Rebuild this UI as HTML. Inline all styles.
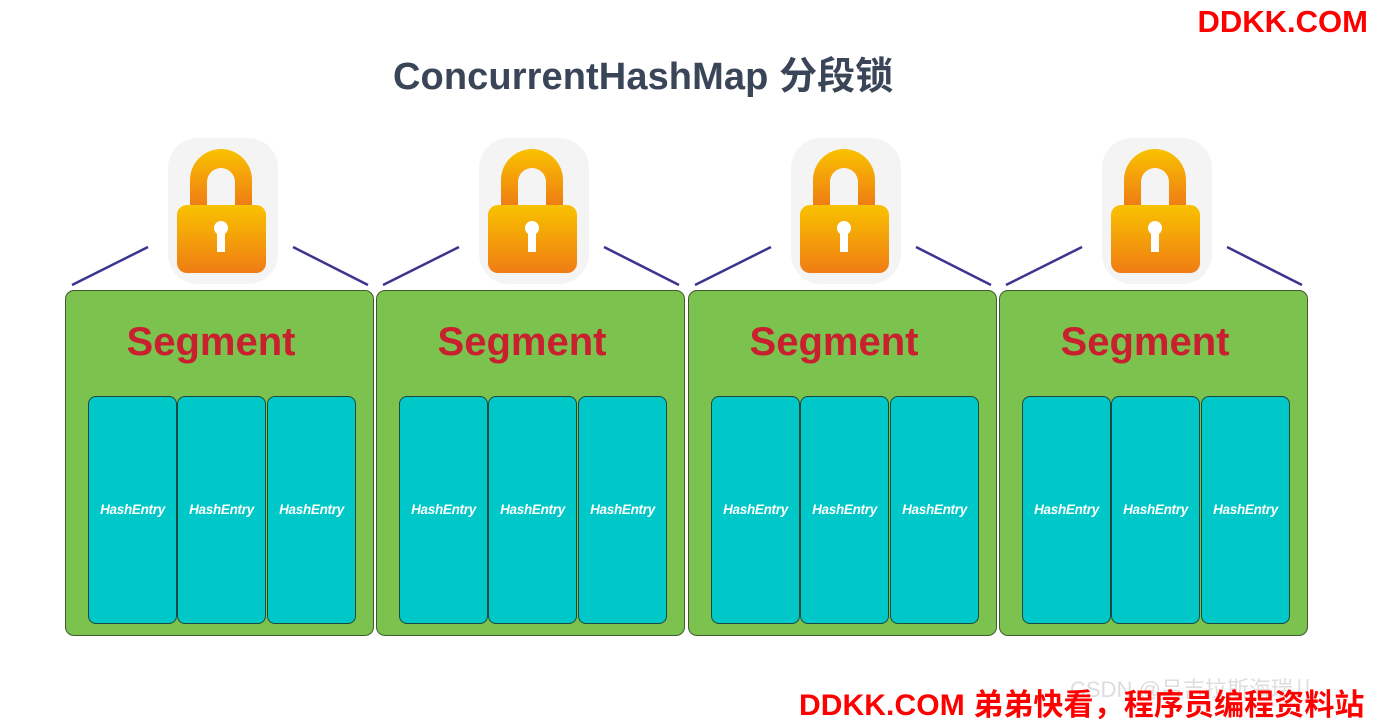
<!DOCTYPE html>
<html><head><meta charset="utf-8"><style>
body{margin:0;width:1373px;height:714px;background:#fff;position:relative;overflow:hidden;font-family:"Liberation Sans","Noto Sans CJK SC",sans-serif}
.a{position:absolute}
.seg{position:absolute;top:290px;width:309px;height:346px;background:#7cc24e;border:1px solid #3f5a2c;border-radius:9px;box-sizing:border-box}
.seg .t{position:absolute;left:0;width:290px;top:29px;text-align:center;color:#c8202f;font-weight:bold;font-size:40px}
.e{position:absolute;top:105px;width:89px;height:228px;background:#00c8c8;border:1px solid #1c4a3e;border-radius:8px;box-sizing:border-box;color:#fff;font-style:italic;font-weight:bold;font-size:13.5px;text-align:center;line-height:226px;letter-spacing:-0.3px}
</style></head><body>
<div class="a" style="left:393px;top:45px;font-size:38px;color:#3a4658;font-weight:bold;letter-spacing:0.1px">ConcurrentHashMap 分段锁</div>
<div class="a" style="right:5px;top:4px;font-size:31px;color:#f00;font-weight:bold">DDKK.COM</div>
<svg class="a" style="left:0;top:0" width="1373" height="300">
<defs><linearGradient id="g" x1="0" y1="0" x2="0" y2="1"><stop offset="0" stop-color="#f9c200"/><stop offset="1" stop-color="#ef7c14"/></linearGradient></defs>
<g id="L">
<line x1="72" y1="285" x2="148" y2="247" stroke="#3b3590" stroke-width="2.5"/>
<line x1="293" y1="247" x2="368" y2="285" stroke="#3b3590" stroke-width="2.5"/>
<rect x="168" y="138" width="110" height="146" rx="30" fill="#f4f4f4"/>
<path d="M190 206 V180 a31 31 0 0 1 62 0 V206 h-17 V182 a14 14 0 0 0 -28 0 V206z" fill="url(#g)"/>
<rect x="177" y="205" width="89" height="68" rx="10" fill="url(#g)"/>
<circle cx="221" cy="228" r="7" fill="#fff"/><rect x="217" y="230" width="8" height="22" fill="#fff"/>
</g>
<use href="#L" x="311"/><use href="#L" x="623"/><use href="#L" x="934"/>
</svg>
<div class="seg" style="left:65px"><div class="t">Segment</div><div class="e" style="left:22px">HashEntry</div><div class="e" style="left:111px">HashEntry</div><div class="e" style="left:201px">HashEntry</div></div>
<div class="seg" style="left:376px"><div class="t">Segment</div><div class="e" style="left:22px">HashEntry</div><div class="e" style="left:111px">HashEntry</div><div class="e" style="left:201px">HashEntry</div></div>
<div class="seg" style="left:688px"><div class="t">Segment</div><div class="e" style="left:22px">HashEntry</div><div class="e" style="left:111px">HashEntry</div><div class="e" style="left:201px">HashEntry</div></div>
<div class="seg" style="left:999px"><div class="t">Segment</div><div class="e" style="left:22px">HashEntry</div><div class="e" style="left:111px">HashEntry</div><div class="e" style="left:201px">HashEntry</div></div>
<div class="a" style="left:1070px;top:672px;font-size:22px;color:#ddd">CSDN @吕吉拉斯海瑞儿</div>
<div class="a" style="left:799px;top:680px;font-size:30px;color:#f00;font-weight:bold;white-space:nowrap;letter-spacing:0.1px">DDKK.COM 弟弟快看，程序员编程资料站</div>
</body></html>
